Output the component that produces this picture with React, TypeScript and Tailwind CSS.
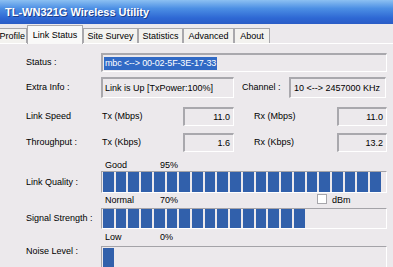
import React from "react";

const font = "font-['Liberation_Sans',Arial,sans-serif]";
const sunken =
  "border-t-2 border-l-2 border-r border-b border-t-[#a9a8ad] border-l-[#a9a8ad] border-r-white border-b-white";

const tabs = [
  { label: "Link Status", w: "w-[56px]", active: true },
  { label: "Site Survey", w: "w-[55px]" },
  { label: "Statistics", w: "w-[45px]" },
  { label: "Advanced", w: "w-[51px]" },
  { label: "About", w: "w-[36px]" },
];

function Blocks({ count }: { count: number }) {
  return (
    <div className="flex h-full gap-[2px]">
      {Array.from({ length: count }).map((_, i) => (
        <div key={i} className="h-full w-[10.73px] bg-[#3160ab]" />
      ))}
    </div>
  );
}

function Bar({ count, h }: { count: number; h: string }) {
  return (
    <div
      className={`w-[286px] ${h} border-t border-l border-r border-b border-t-[#a4a3a8] border-l-[#a4a3a8] border-r-white border-b-white pl-[1px]`}
    >
      <Blocks count={count} />
    </div>
  );
}

function ValueBox({ value, w }: { value: string; w: string }) {
  return (
    <div
      className={`${w} h-[19px] ${sunken} flex items-center justify-end pr-[3px]`}
    >
      {value}
    </div>
  );
}

export default function App() {
  return (
    <div
      className={`h-[267px] w-[393px] overflow-hidden bg-[#ece9ec] text-[9px] leading-none text-black ${font}`}
    >
      <div className="flex h-[24px] items-center bg-[linear-gradient(to_bottom,#8cc0f2,#4c8fe4_35%,#2e68d4_75%,#2a5cc6)] pl-[5px]">
        <span className="text-[11px] font-bold text-white [text-shadow:1px_1px_0_#1d3f8a]">
          TL-WN321G Wireless Utility
        </span>
      </div>

      <div className="mt-[3px] flex h-[17px] items-end border-b border-b-white">
        {/* first tab is scrolled partly out of view */}
        <div className="flex h-[15px] w-[27px] items-center justify-end border border-b-0 border-l-0 border-[#a9a8ac] bg-[#f3f2ef] pr-[1px]">
          Profile
        </div>
        {tabs.map((t) =>
          t.active ? (
            <div
              key={t.label}
              className={`${t.w} relative z-10 -mb-[1px] flex h-[19px] items-center justify-center border border-b-0 border-[#a9a8ac] bg-[#f9f9f8]`}
            >
              {t.label}
            </div>
          ) : (
            <div
              key={t.label}
              className={`${t.w} flex h-[15px] items-center justify-center border border-b-0 border-[#a9a8ac] bg-[#f3f2ef]`}
            >
              {t.label}
            </div>
          ),
        )}
      </div>

      <div className="flex flex-col pl-[26px]">
        <div className="mt-[9px] flex items-center">
          <div className="w-[75px]">Status :</div>
          <div className={`h-[19px] w-[286px] ${sunken} flex items-center pl-[1px]`}>
            <span className="bg-[#316ac5] px-[1px] py-[2px] tracking-[-0.15px] text-white">
              mbc &lt;--&gt; 00-02-5F-3E-17-33
            </span>
          </div>
        </div>

        <div className="mt-[5px] flex items-center">
          <div className="w-[75px]">Extra Info :</div>
          <div className={`h-[21px] w-[133px] ${sunken} flex items-center pl-[2px]`}>
            Link is Up [TxPower:100%]
          </div>
          <div className="ml-[8px] w-[47px]">Channel :</div>
          <div className={`h-[21px] w-[97px] ${sunken} flex items-center pl-[3px]`}>
            10 &lt;--&gt; 2457000 KHz
          </div>
        </div>

        <div className="mt-[9px] flex items-center">
          <div className="w-[76px]">Link Speed</div>
          <div className="w-[81px]">Tx (Mbps)</div>
          <ValueBox value="11.0" w="w-[51px]" />
          <div className="ml-[20px] w-[83px]">Rx (Mbps)</div>
          <ValueBox value="11.0" w="w-[50px]" />
        </div>

        <div className="mt-[7px] flex items-center">
          <div className="w-[76px]">Throughput :</div>
          <div className="w-[81px]">Tx (Kbps)</div>
          <ValueBox value="1.6" w="w-[51px]" />
          <div className="ml-[20px] w-[83px]">Rx (Kbps)</div>
          <ValueBox value="13.2" w="w-[50px]" />
        </div>

        <div className="mt-[7px] flex h-[12px] items-center pl-[79px]">
          <div className="w-[55px]">Good</div>
          <div>95%</div>
        </div>

        <div className="flex items-center">
          <div className="w-[75px]">Link Quality :</div>
          <Bar count={22} h="h-[22px]" />
        </div>

        <div className="flex h-[15px] items-center pl-[79px]">
          <div className="w-[55px]">Normal</div>
          <div className="w-[157px]">70%</div>
          <div className="mb-[3px] h-[10px] w-[10px] border border-[#a7a6ab] bg-white" />
          <div className="ml-[5px]">dBm</div>
        </div>

        <div className="flex items-center">
          <div className="w-[75px]">Signal Strength :</div>
          <Bar count={16} h="h-[21px]" />
        </div>

        <div className="flex h-[17px] items-center pl-[79px]">
          <div className="w-[55px]">Low</div>
          <div>0%</div>
        </div>

        <div className="flex items-start">
          <div className="mt-[1px] w-[75px]">Noise Level :</div>
          <div className="h-[22px] w-[286px] border-t border-l border-r border-t-[#a4a3a8] border-l-[#a4a3a8] border-r-white pl-[1px] pt-[1px]">
            <Blocks count={1} />
          </div>
        </div>
      </div>
    </div>
  );
}
